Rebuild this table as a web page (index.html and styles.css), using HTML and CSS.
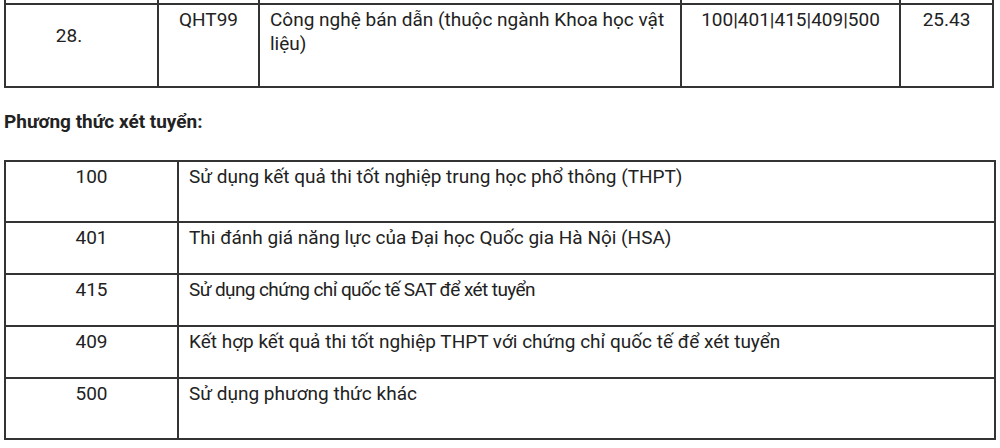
FILE: index.html
```html
<!DOCTYPE html>
<html lang="vi">
<head>
<meta charset="utf-8">
<title>Phương thức xét tuyển</title>
<link rel="stylesheet" href="styles.css">
</head>
<body>
<div class="page">
  <table class="grid majors">
    <colgroup>
      <col class="c-stt"><col class="c-code"><col class="c-name"><col class="c-method"><col class="c-score">
    </colgroup>
    <tr class="prev"><td></td><td></td><td></td><td></td><td></td></tr>
    <tr class="major">
      <td class="center stt">28.</td>
      <td class="center">QHT99</td>
      <td>Công nghệ bán dẫn (thuộc ngành Khoa học vật liệu)</td>
      <td class="center">100|401|415|409|500</td>
      <td class="center">25.43</td>
    </tr>
  </table>

  <p class="heading">Phương thức xét tuyển:</p>

  <table class="grid methods">
    <colgroup>
      <col class="c-mcode"><col class="c-mdesc">
    </colgroup>
    <tr class="tall"><td class="center">100</td><td>Sử dụng kết quả thi tốt nghiệp trung học phổ thông (THPT)</td></tr>
    <tr class="short"><td class="center">401</td><td>Thi đánh giá năng lực của Đại học Quốc gia Hà Nội (HSA)</td></tr>
    <tr class="short"><td class="center">415</td><td class="condensed">Sử dụng chứng chỉ quốc tế SAT để xét tuyển</td></tr>
    <tr class="short"><td class="center">409</td><td>Kết hợp kết quả thi tốt nghiệp THPT với chứng chỉ quốc tế để xét tuyển</td></tr>
    <tr class="tall"><td class="center">500</td><td>Sử dụng phương thức khác</td></tr>
  </table>
</div>
</body>
</html>
```

FILE: styles.css
```css
html, body {
  margin: 0;
  padding: 0;
  background: #ffffff;
}

body {
  font-family: Roboto, "Noto Sans", "Liberation Sans", sans-serif;
  font-size: 19px;
  line-height: 24px;
  color: #222222;
  overflow: hidden;
}

.page {
  padding: 0 6px 0 4px;
}

.grid {
  border-collapse: collapse;
  table-layout: fixed;
  width: 990px;
}

.grid td {
  border: 2px solid #333333;
  vertical-align: top;
  padding: 3px 10px 0 10px;
  box-sizing: border-box;
}

.majors {
  margin-top: -10px;
}

.c-stt { width: 153px; }
.c-code { width: 101px; }
.c-name { width: 422px; }
.c-method { width: 219px; }
.c-score { width: 93px; }

.grid .prev td {
  height: 13px;
  padding: 0;
}

.major td {
  height: 83px;
}

.center {
  text-align: center;
}

.grid td.stt {
  vertical-align: middle;
  padding: 0 35px 20px 10px;
}

.heading {
  margin: 22px 0 0 0;
  font-weight: 700;
  font-size: 19px;
}

.methods {
  margin-top: 26px;
}

.c-mcode { width: 173px; }
.c-mdesc { width: 817px; }

.tall td { height: 61px; }
.short td { height: 52px; }

.condensed {
  letter-spacing: -0.6px;
}
```
